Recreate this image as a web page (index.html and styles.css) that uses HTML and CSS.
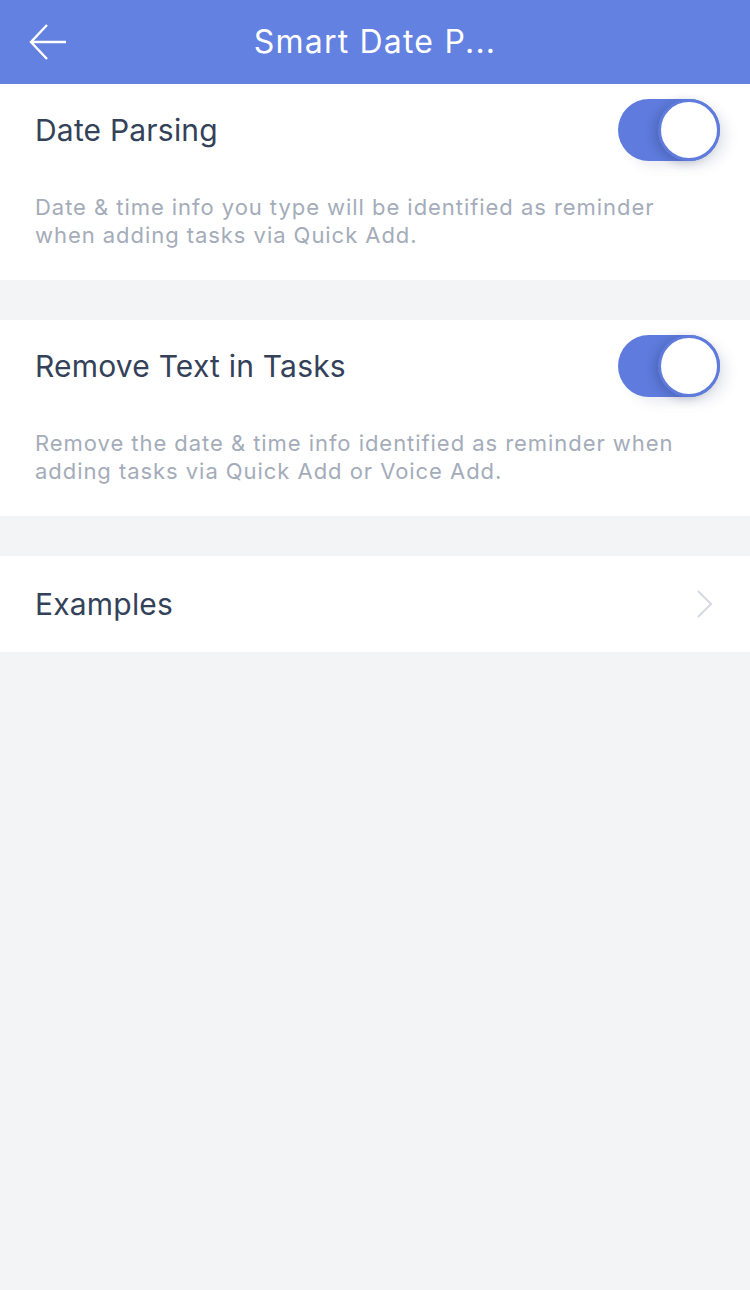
FILE: index.html
```html
<!DOCTYPE html>
<html>
<head>
<meta charset="utf-8">
<link rel="stylesheet" href="styles.css">
</head>
<body>
<div class="app">
  <header class="topbar">
    <span class="back">
      <svg width="40" height="40" viewBox="0 0 40 40"><path d="M38 20 H4 M19 3 L3 20 L19 37" fill="none" stroke="#fff" stroke-width="2.4"/></svg>
    </span>
    <h1 class="title">Smart Date P...</h1>
  </header>

  <section class="card">
    <div class="row">
      <span class="label">Date Parsing</span>
      <span class="toggle"><span class="knob"></span></span>
    </div>
    <p class="desc">Date &amp; time info you type will be identified as reminder when adding tasks via Quick Add.</p>
  </section>

  <section class="card">
    <div class="row">
      <span class="label">Remove Text in Tasks</span>
      <span class="toggle"><span class="knob"></span></span>
    </div>
    <p class="desc">Remove the date &amp; time info identified as reminder when adding tasks via Quick Add or Voice Add.</p>
  </section>

  <section class="card link">
    <div class="row">
      <span class="label">Examples</span>
      <svg class="chev" width="18" height="28" viewBox="0 0 18 28"><path d="M2 1 L15 14 L2 27" fill="none" stroke="#D5D9E0" stroke-width="2"/></svg>
    </div>
  </section>
</div>
</body>
</html>
```

FILE: styles.css
```css
* { box-sizing: border-box; }
html, body { margin: 0; padding: 0; }
body {
  background: #F3F4F6;
  font-family: Inter, Roboto, "Liberation Sans", sans-serif;
  width: 750px;
  height: 1290px;
  overflow: hidden;
}
.app { display: flex; flex-direction: column; gap: 40px; }
.topbar {
  height: 84px;
  background: #6281E0;
  display: flex;
  align-items: center;
  justify-content: center;
  position: relative;
  margin-bottom: -40px;
}
.back {
  position: absolute;
  left: 28px;
  top: 22px;
  width: 40px;
  height: 40px;
  display: block;
}
.back svg { display: block; }
.title {
  margin: 0 0 2px;
  color: #fff;
  font-weight: 400;
  font-size: 32px;
  letter-spacing: 1.2px;
}
.card {
  background: #fff;
  padding: 0 30px 0 35px;
  height: 196px;
}
.card.link { height: 96px; }
.row {
  display: flex;
  align-items: center;
  justify-content: space-between;
  height: 92px;
}
.link .row { height: 96px; padding-right: 6px; }
.label {
  color: #344259;
  font-size: 30px;
  letter-spacing: 0.2px;
}
.toggle {
  width: 102px;
  height: 62px;
  border-radius: 31px;
  background: #5E7BDD;
  position: relative;
  display: block;
  box-shadow: 8px 6px 12px rgba(90, 100, 140, 0.12);
}
.knob {
  position: absolute;
  right: 0;
  top: 0;
  width: 62px;
  height: 62px;
  border-radius: 50%;
  background: #fff;
  border: 3px solid #5E7BDD;
  box-shadow: -4px 2px 8px rgba(40, 50, 90, 0.25);
}
.desc {
  margin: 17px 0 0;
  color: #A4ACBA;
  font-size: 22px;
  line-height: 28px;
  letter-spacing: 0.95px;
  max-width: 655px;
}
```
